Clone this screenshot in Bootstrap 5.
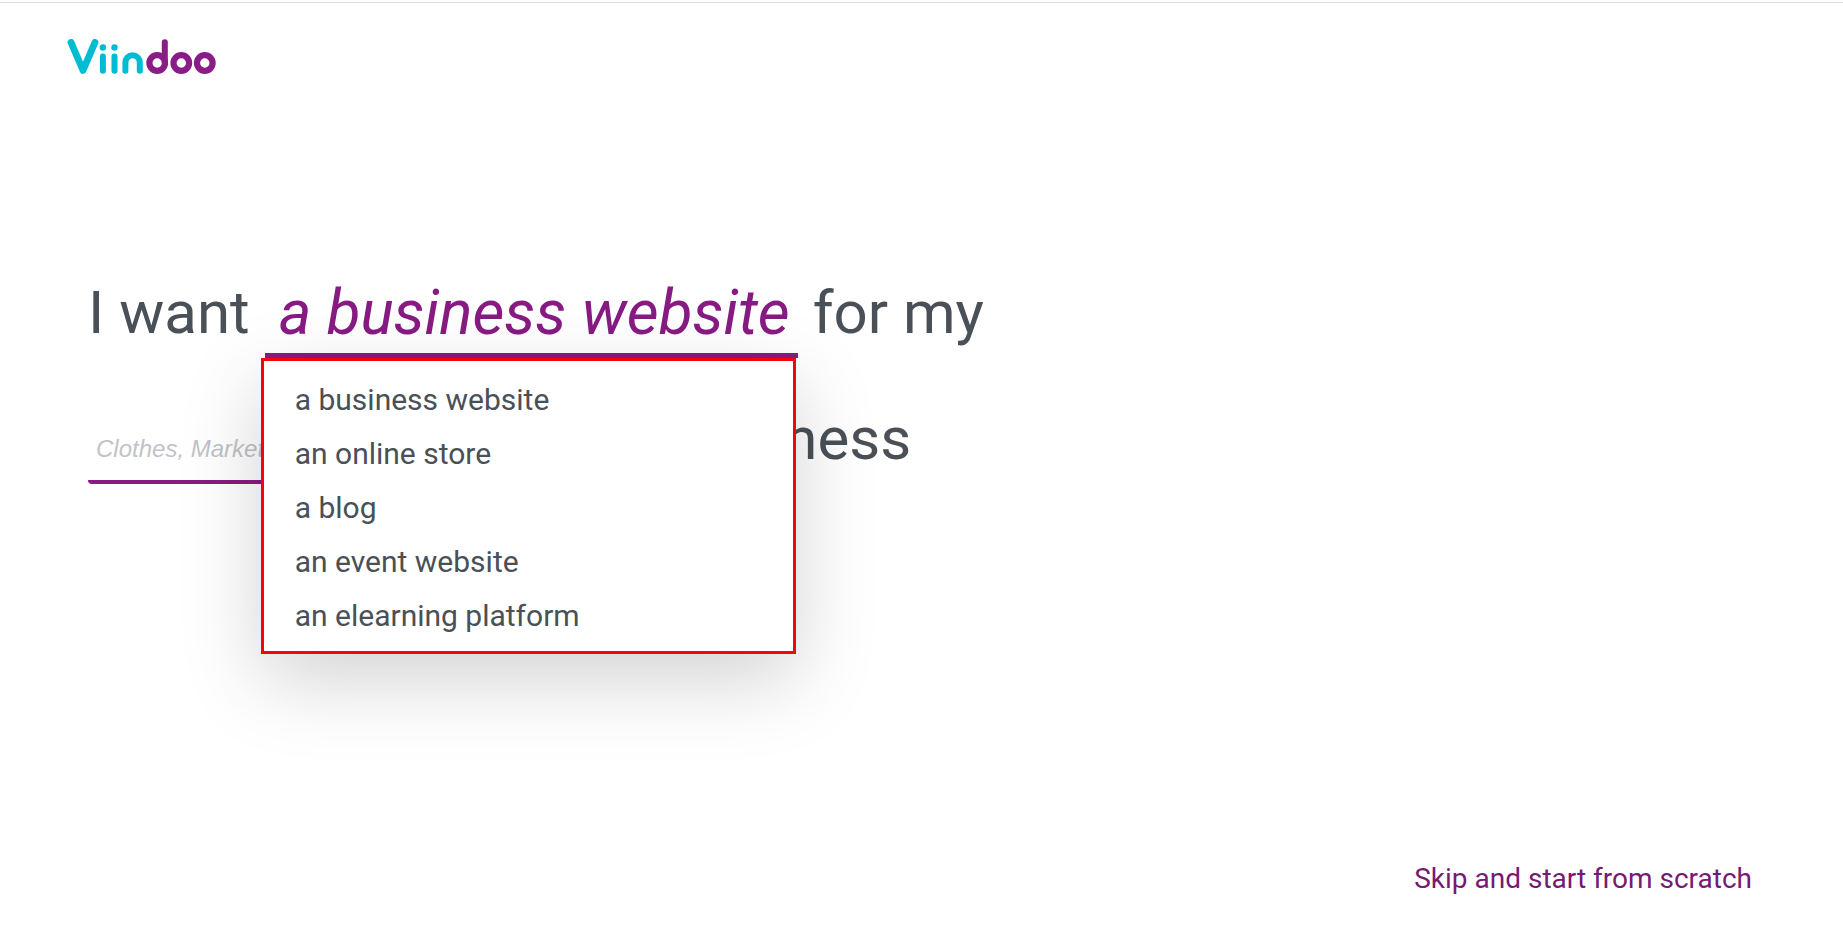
<!DOCTYPE html>
<html lang="en">
<head>
<meta charset="utf-8">
<meta name="viewport" content="width=device-width, initial-scale=1">
<title>Viindoo website configurator</title>
<link href="https://cdn.jsdelivr.net/npm/bootstrap@5.3.0/dist/css/bootstrap.min.css" rel="stylesheet">
<style>
  :root { --brand: #871b83; --ink: #495057; }
  body { font-family: Roboto, sans-serif; color: var(--ink); background: #fff; }
  .site-header { margin-top: 2px; border-top: 1px solid #dcdcdc; padding: 36px 67px; }
  .site-logo svg { display: block; }
  .configurator { padding: 162px 88px 0; }
  .sentence { font-size: 60px; line-height: 80px; column-gap: 15px; }
  .sentence + .sentence { margin-top: 41px; }
  .type-toggle { padding: 0 8px 0 14px; border: 0; border-bottom: 5px solid var(--brand); background: none; color: var(--brand); font-size: 62px; font-style: italic; line-height: 80px; }
  .type-menu.dropdown-menu { top: 100%; left: -4px; right: 2px; margin: 0; padding: 12px 0 8px; border: 3px solid #f2060c; border-radius: 0; box-shadow: 0 26px 76px rgba(0, 0, 0, .175); }
  .type-menu .dropdown-item { padding: 0 31px; font-size: 30px; line-height: 54px; color: var(--ink); }
  .industry { width: 569px; max-width: 100%; height: 85px; padding: 18px 8px 0; border: 0; border-bottom: 4px solid var(--brand); border-radius: 0 0 4px 4px; background: none; font: italic 24px "Liberation Sans", sans-serif; color: var(--ink); outline: 0; }
  .industry::placeholder { color: #bfc3ca; opacity: 1; }
  .site-footer { padding: 0 91px 35px; font-size: 28px; line-height: 42px; }
  .site-footer a { color: #761a72; }
</style>
</head>
<body class="d-flex flex-column min-vh-100">
<header class="site-header d-flex">
  <a class="site-logo" href="#" aria-label="Viindoo">
    <svg width="150" height="36" viewBox="67 39 150 36" fill="none" stroke-width="6" stroke-linecap="round" stroke-linejoin="round" aria-hidden="true">
      <g stroke="#00bcd2">
        <path stroke-width="6.8" d="M71 42.4 83 70.4 95 42.4"/>
        <path d="M102.9 56.4V70.8M114.5 56.4V70.8"/>
        <path d="M125.4 70.8V62.5a7.2 7.2 0 0 1 14.4 0V70.8"/>
      </g>
      <g fill="#00bcd2"><circle cx="102.9" cy="47.5" r="3.2"/><circle cx="114.5" cy="47.5" r="3.2"/></g>
      <g stroke="#8a1c86" stroke-width="6.2">
        <circle cx="157.2" cy="63" r="7.8"/>
        <path stroke-width="6" d="M164.8 42.2V63"/>
        <circle cx="181.3" cy="63" r="7.8"/>
        <circle cx="204.8" cy="63" r="7.8"/>
      </g>
    </svg>
  </a>
</header>

<main class="configurator flex-grow-1">
  <div class="sentence d-flex flex-wrap">
    <span>I want</span>
    <div class="dropdown">
      <button type="button" class="type-toggle d-block" data-bs-toggle="dropdown" aria-expanded="true">a business website</button>
      <ul class="dropdown-menu type-menu show">
        <li><a class="dropdown-item" href="#">a business website</a></li>
        <li><a class="dropdown-item" href="#">an online store</a></li>
        <li><a class="dropdown-item" href="#">a blog</a></li>
        <li><a class="dropdown-item" href="#">an event website</a></li>
        <li><a class="dropdown-item" href="#">an elearning platform</a></li>
      </ul>
    </div>
    <span>for my</span>
  </div>
  <div class="sentence d-flex flex-wrap">
    <input class="industry" id="industry" type="text" placeholder="Clothes, Marketing">
    <label for="industry">business</label>
  </div>
</main>

<footer class="site-footer text-end">
  <a class="text-decoration-none" href="#">Skip and start from scratch</a>
</footer>
<script src="https://cdn.jsdelivr.net/npm/bootstrap@5.3.0/dist/js/bootstrap.bundle.min.js"></script>
</body>
</html>
